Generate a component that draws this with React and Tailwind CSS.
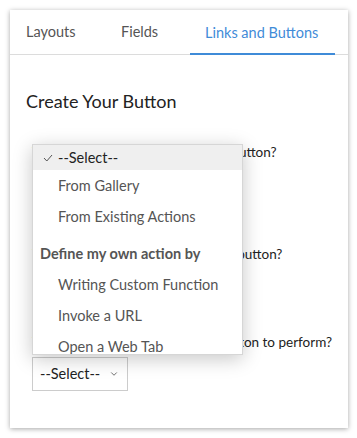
import React from "react";
import { ChevronDown } from "lucide-react";

const tabs = [
  { label: "Layouts", w: "w-[95px]" },
  { label: "Fields", w: "w-[84px]" },
  { label: "Links and Buttons", w: "w-[145px]", active: true },
];

const MenuItem = ({ children }) => (
  <div className="h-[31px] flex items-center pl-[25px] text-[14.5px] text-[#555]">{children}</div>
);

const App = () => {
  return (
    <div className="w-[357px] h-[438px] bg-white p-[10px] font-['Lato',sans-serif]">
      <div className="relative w-[338px] h-[418px] bg-white shadow-[0_1px_5px_rgba(0,0,0,0.35)]">
        {/* Tabs */}
        <div className="flex h-[45px] border-b border-[#dcdcdc] pl-px">
          {tabs.map((t) => (
            <div
              key={t.label}
              className={`${t.w} pl-[15px] flex items-center text-[14.5px] ${
                t.active ? "text-[#3f8bd8] border-b-2 border-[#3f8bd8] -mb-px pt-[2px]" : "text-[#555]"
              }`}
            >
              {t.label}
            </div>
          ))}
        </div>

        {/* Form */}
        <div className="px-[16px]">
          <h2 className="mt-[34px] text-[18px] leading-[24px] text-[#222]">Create Your Button</h2>

          <div className="pl-[6px] whitespace-nowrap text-[13.5px] leading-[18px] text-[#222]">
            <p className="mt-[30px]">What would you like to name the button?</p>
            <div className="mt-[6px] w-[211px] h-[30px] border border-[#ccc]" />

            <p className="mt-[48px]">Where would you like to place the button?</p>
            <div className="mt-[6px] w-[96px] h-[30px] border border-[#ccc]" />

            <p className="mt-[34px]">What action would you like the button to perform?</p>
            <div className="mt-[6px] w-[96px] h-[34px] border border-[#ccc] flex items-center justify-between pl-[7px] pr-[8px] text-[14.5px]">
              <span>--Select--</span>
              <ChevronDown size={10} strokeWidth={2} className="text-[#555]" />
            </div>
          </div>
        </div>

        {/* Open dropdown menu */}
        <div className="absolute left-[22px] top-[134px] w-[211px] h-[211px] overflow-hidden bg-white border border-[#d6d6d6] shadow-[0_4px_18px_rgba(0,0,0,0.22)]">
          <div className="h-[25px] bg-[#efefef] flex items-center pl-[10px] text-[14.5px] text-[#222]">
            <svg width="10" height="8" viewBox="0 0 10 8" className="mr-[5px]">
              <polyline points="1,4 3.8,7 9,1" fill="none" stroke="#555" strokeWidth="1" />
            </svg>
            --Select--
          </div>
          <MenuItem>From Gallery</MenuItem>
          <MenuItem>From Existing Actions</MenuItem>
          <div className="h-[31px] mt-[6px] flex items-center pl-[7px] text-[14.5px] font-bold text-[#555]">
            Define my own action by
          </div>
          <MenuItem>Writing Custom Function</MenuItem>
          <MenuItem>Invoke a URL</MenuItem>
          <MenuItem>Open a Web Tab</MenuItem>
        </div>
      </div>
    </div>
  );
};

export default App;
